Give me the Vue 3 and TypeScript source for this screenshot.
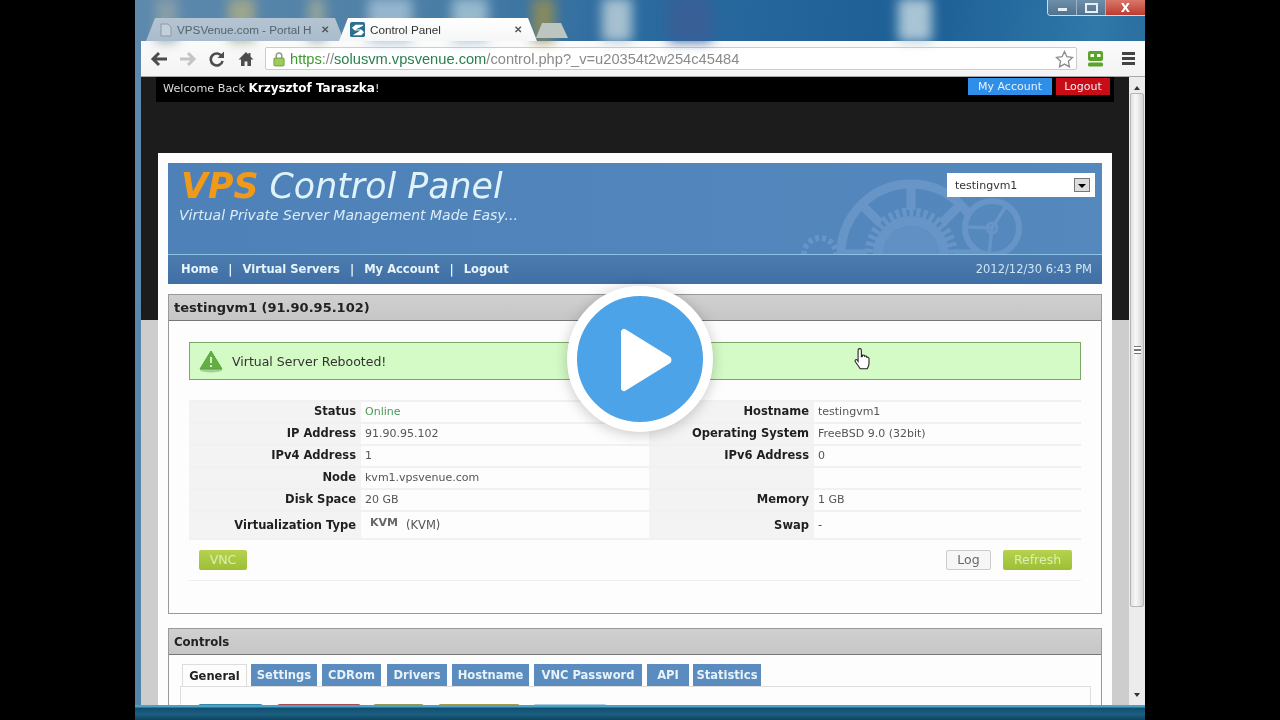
<script setup lang="ts">
interface InfoRow {
  label: string;
  value: string;
  label2: string;
  value2: string;
  online?: boolean;
  kvm?: boolean;
}

const rows: InfoRow[] = [
  { label: 'Status', value: 'Online', label2: 'Hostname', value2: 'testingvm1', online: true },
  { label: 'IP Address', value: '91.90.95.102', label2: 'Operating System', value2: 'FreeBSD 9.0 (32bit)' },
  { label: 'IPv4 Address', value: '1', label2: 'IPv6 Address', value2: '0' },
  { label: 'Node', value: 'kvm1.vpsvenue.com', label2: '', value2: '' },
  { label: 'Disk Space', value: '20 GB', label2: 'Memory', value2: '1 GB' },
  { label: 'Virtualization Type', value: '(KVM)', label2: 'Swap', value2: '-', kvm: true },
];

const navLinks = ['Home', 'Virtual Servers', 'My Account', 'Logout'];
const tabs = [
  { name: 'Settings', w: 66, gap: 5 },
  { name: 'CDRom', w: 59, gap: 6 },
  { name: 'Drivers', w: 60, gap: 5 },
  { name: 'Hostname', w: 77, gap: 5 },
  { name: 'VNC Password', w: 108, gap: 5 },
  { name: 'API', w: 42, gap: 4 },
  { name: 'Statistics', w: 68, gap: 0 },
];
const actionColors = [
  { w: 65, gap: 14, c: '#2f88a8' },
  { w: 84, gap: 12, c: '#a84a58' },
  { w: 51, gap: 14, c: '#8f9a55' },
  { w: 82, gap: 13, c: '#a39a4c' },
  { w: 74, gap: 0, c: '#a9cfe0' },
];
const desktopIcons = [
  { x: 20, w: 23, c: '#8aa0a8' },
  { x: 93, w: 27, c: '#a4a98a' },
  { x: 173, w: 17, c: '#98a69a' },
  { x: 233, w: 44, c: '#9dbbd2' },
  { x: 317, w: 36, c: '#a0c0d2' },
  { x: 397, w: 23, c: '#8f8c58' },
  { x: 467, w: 30, c: '#b4cad6' },
  { x: 533, w: 44, c: '#3a5f96' },
  { x: 763, w: 34, c: '#b8d0dc' },
];
</script>

<template>
  <div class="stage">
    <div class="screen">
      <i
        v-for="d in desktopIcons"
        :key="d.x"
        class="desk-icon"
        :style="{ left: d.x + 'px', width: d.w + 'px', background: d.c }"
      ></i>

      <div class="titlebar">
        <div class="tab tab-off">
          <svg width="12" height="14" viewBox="0 0 12 14" class="tab-ico"><path d="M1 1h7l3 3v9H1z" fill="#c3d0da" stroke="#8b9aa5" /></svg>
          <span class="tab-label">VPSVenue.com - Portal H</span>
          <span class="tab-x">✕</span>
        </div>
        <div class="tab tab-on">
          <svg width="15" height="15" viewBox="0 0 16 16" class="tab-ico">
            <rect width="16" height="16" rx="2" fill="#2c6f90" />
            <path d="M14 3H6L2 6l3 3h6l-8 5h9l3-3-3-3H6l8-4z" fill="#fff" />
          </svg>
          <span class="tab-label">Control Panel</span>
          <span class="tab-x">✕</span>
        </div>
        <div class="newtab"></div>
        <div class="winctl">
          <span class="wc wc-min"><i></i></span>
          <span class="wc wc-max"><i></i></span>
          <span class="wc wc-close">X</span>
        </div>
      </div>

      <div class="window">
        <div class="toolbar">
          <svg class="tool" width="18" height="16" viewBox="0 0 18 16"><path d="M9 2 3 8l6 6M3 8h14" fill="none" stroke="#4d4d4d" stroke-width="3" /></svg>
          <svg class="tool" width="18" height="16" viewBox="0 0 18 16"><path d="m9 2 6 6-6 6m6-6H1" fill="none" stroke="#c4c4c4" stroke-width="3" /></svg>
          <svg class="tool" width="17" height="16" viewBox="0 0 17 16"><path d="M14 5.500A6 6 0 1 0 14.600 10" fill="none" stroke="#4d4d4d" stroke-width="2.600" /><path d="M16 0.500V7h-6.500z" fill="#4d4d4d" /></svg>
          <svg class="tool home" width="16" height="16" viewBox="0 0 16 16"><path d="M8 1 0.500 8.500H3V15h3.600v-4.500h2.800V15H13V8.500h2.500L12.500 5.500V2h-2v1.500z" fill="#4d4d4d" /></svg>
          <div class="omnibox">
            <svg width="12" height="16" viewBox="0 0 13 17" class="lock"><path d="M3.500 8V5a3 3 0 0 1 6 0v3" fill="none" stroke="#8f9a8a" stroke-width="1.600" /><rect x="1" y="7.500" width="11" height="8.500" rx="1" fill="#9ccc5a" stroke="#6f9a3a" /></svg>
            <span class="url"><span class="u-green">https</span><span class="u-gray">://</span><span class="u-dark">solusvm.vpsvenue.com</span><span class="u-gray">/control.php?_v=u20354t2w254c45484</span></span>
            <svg width="19" height="18" viewBox="0 0 19 18" class="star"><path d="m9.500 1.500 2.400 5.200 5.600.7-4.100 3.900 1.100 5.600-5-2.800-5 2.800 1.100-5.600-4.100-3.900 5.600-.7z" fill="#fff" stroke="#8a8a8a" stroke-width="1.300" /></svg>
          </div>
          <svg width="15" height="16" viewBox="0 0 15 16" class="robot"><rect y="0" width="15" height="10" rx="2" fill="#5ba32b" /><rect x="2.500" y="3" width="3.500" height="3" fill="#fff" /><rect x="9" y="3" width="3.500" height="3" fill="#fff" /><rect y="11.500" width="15" height="4" rx="1.500" fill="#5ba32b" /></svg>
          <div class="burger"><i></i><i></i><i></i></div>
        </div>

        <div class="browser-page">
          <div class="viewport">
            <div class="topbar">
              <span class="welcome">Welcome Back <b>Krzysztof Taraszka</b>!</span>
              <span class="top-actions">
                <span class="top-btn blue">My Account</span>
                <span class="top-btn red">Logout</span>
              </span>
            </div>

            <div class="wrap">
              <header class="site-head">
                <div class="brand">
                  <div class="brand-text">
                    <h1><span class="vps">VPS</span> Control Panel</h1>
                    <p>Virtual Private Server Management Made Easy...</p>
                  </div>
                  <svg class="gears" width="260" height="91" viewBox="0 0 260 91" fill="none" stroke="#6895c8">
                    <circle cx="111" cy="91" r="70" stroke-width="9" />
                    <path d="M111 21v26M62 42l18 18M160 42l-18 18M41 91h26M181 91h-26" stroke-width="9" />
                    <circle cx="111" cy="91" r="42" stroke-width="9" stroke-dasharray="4 3" />
                    <circle cx="111" cy="91" r="33" stroke-width="10" />
                    <circle cx="111" cy="91" r="28" fill="#6190c4" stroke="none" />
                    <circle cx="192" cy="65" r="27" stroke-width="6" fill="#5588bd" />
                    <path d="M192 65l-3 26M192 65l-24-1M192 65l14-22" stroke-width="3.500" />
                    <circle cx="192" cy="65" r="5" stroke-width="3" />
                    <circle cx="20" cy="91" r="16" stroke-width="6" stroke-dasharray="4 3" />
                  </svg>
                  <div class="vm-select">
                    <span>testingvm1</span>
                    <span class="vm-arrow"></span>
                  </div>
                </div>
                <nav class="site-nav">
                  <template v-for="(link, i) in navLinks" :key="link">
                    <span v-if="i > 0" class="sep">|</span>
                    <a>{{ link }}</a>
                  </template>
                  <span class="clock">2012/12/30 6:43 PM</span>
                </nav>
              </header>

              <section class="panel main-panel">
                <h2 class="panel-title">testingvm1 (91.90.95.102)</h2>
                <div class="alert">
                  <svg width="24" height="24" viewBox="0 0 24 24">
                    <ellipse cx="12" cy="21" rx="11" ry="2.500" fill="#a9cf98" />
                    <path d="M12 2 23 20H1z" fill="#62b044" stroke="#58a03e" />
                    <path d="M12 8v6M12 16v2" stroke="#d8efc8" stroke-width="2" />
                  </svg>
                  <span>Virtual Server Rebooted!</span>
                </div>

                <div class="info">
                  <div v-for="(row, i) in rows" :key="row.label" class="info-row" :class="{ tall: i === rows.length - 1 }">
                    <div class="cell-label">{{ row.label }}</div>
                    <div class="cell-value" :class="{ online: row.online }">
                      <span v-if="row.kvm" class="kvm-logo">KVM</span>{{ row.value }}
                    </div>
                    <div class="cell-label second">{{ row.label2 }}</div>
                    <div class="cell-value">{{ row.value2 }}</div>
                  </div>
                  <div class="actions">
                    <span class="btn green vnc">VNC</span>
                    <span class="btn plain">Log</span>
                    <span class="btn green refresh">Refresh</span>
                  </div>
                </div>
              </section>

              <section class="panel controls">
                <h2 class="panel-title small">Controls</h2>
                <div class="tabstrip">
                  <span class="ctab active">General</span>
                  <span
                    v-for="t in tabs"
                    :key="t.name"
                    class="ctab"
                    :style="{ width: t.w + 'px', marginRight: t.gap + 'px' }"
                  >{{ t.name }}</span>
                </div>
                <div class="tab-body">
                  <i
                    v-for="a in actionColors"
                    :key="a.c"
                    :style="{ width: a.w + 'px', marginRight: a.gap + 'px', background: a.c }"
                  ></i>
                </div>
              </section>
            </div>
          </div>

          <div class="scrollbar">
            <span class="sb-arrow up"></span>
            <div class="sb-thumb"><i></i></div>
            <span class="sb-arrow down"></span>
          </div>
        </div>
      </div>

      <div class="taskbar"></div>

      <svg class="hand" width="20" height="24" viewBox="0 0 18 22">
        <path d="M6 1.500c1 0 1.500.7 1.500 1.600V9l1-.4V7.600c1-.6 2 0 2 .8 1-.5 2 0 2 1 1-.3 2 .2 2 1.200V15c0 2-.8 3-1.600 5H6.500L2 13.500c-1-1.500.6-2.600 1.800-1.500L4.500 13V3c0-1 .6-1.500 1.500-1.500z" fill="#fff" stroke="#222" stroke-width="1" />
      </svg>
    </div>

    <div class="play">
      <svg width="52" height="68" viewBox="0 0 52 68">
        <path d="M4 3 48.500 30.500a4 4 0 0 1 0 7L4 65a3 3 0 0 1-4-3V6a3 3 0 0 1 4-3z" fill="#fff" />
      </svg>
    </div>
  </div>
</template>

<style scoped>
.stage {
  position: relative;
  width: 1280px;
  height: 720px;
  background: #000;
  display: flex;
  justify-content: center;
  overflow: hidden;
  font-family: "DejaVu Sans", Verdana, sans-serif;
}

.screen {
  position: relative;
  width: 1010px;
  height: 720px;
  display: flex;
  flex-direction: column;
  overflow: hidden;
  filter: blur(0.35px);
  background: linear-gradient(100deg, #5d89ad 0%, #4d7fa6 25%, #2a6a9f 45%, #1d5f96 70%, #2f78a8 85%, #1d5a8c 100%);
}

.desk-icon {
  position: absolute;
  top: -2px;
  height: 44px;
  filter: blur(6px);
  border-radius: 3px;
  opacity: 0.9;
}

/* title bar and tabs */
.titlebar {
  position: relative;
  height: 41px;
  flex: none;
  display: flex;
  align-items: flex-end;
  padding-left: 11px;
}

.tab {
  width: 198px;
  height: 23px;
  display: flex;
  align-items: center;
  box-sizing: border-box;
  font-size: 11.7px;
  font-family: "Liberation Sans", Arial, sans-serif;
  clip-path: polygon(0 100%, 9px 0, 189px 0, 198px 100%);
  padding: 0 15px 0 14px;
}

.tab-off {
  background: linear-gradient(#b5c4d2, #a9bccd);
  color: #53646f;
}

.tab-on {
  background: linear-gradient(#ffffff, #f5f6f7);
  color: #333;
  margin-left: -5px;
  padding-left: 11px;
}

.tab-ico {
  flex: none;
  margin-right: 5px;
}

.tab-label {
  flex: 1;
  white-space: nowrap;
  overflow: hidden;
}

.tab-x {
  font-size: 10px;
  font-weight: bold;
  color: #555;
  margin-left: 5px;
}

.newtab {
  width: 32px;
  height: 15px;
  margin-bottom: 3px;
  margin-left: -1px;
  background: #bcc5c0;
  clip-path: polygon(0 100%, 6px 0, 25px 0, 32px 100%);
}

.winctl {
  position: absolute;
  right: 0;
  top: 0;
  width: 98px;
  height: 16px;
  display: flex;
  border: 1px solid #cfdbe5;
  border-top: none;
  border-right: none;
  border-radius: 0 0 0 4px;
  box-sizing: border-box;
  overflow: hidden;
}

.wc {
  display: flex;
  align-items: center;
  justify-content: center;
}

.wc-min,
.wc-max {
  width: 28px;
  background: linear-gradient(#6f8ea8, #4f7391);
  border-right: 1px solid #9fb4c6;
}

.wc-min i {
  width: 9px;
  height: 3px;
  background: #e8eef2;
  margin-top: 4px;
}

.wc-max i {
  width: 9px;
  height: 6px;
  border: 2px solid #e8eef2;
}

.wc-close {
  flex: 1;
  background: linear-gradient(#d9766a, #bb3c30);
  color: #fff;
  font-size: 12px;
  font-weight: bold;
}

/* browser window */
.window {
  flex: 1;
  min-height: 0;
  margin-left: 6px;
  display: flex;
  flex-direction: column;
}

.toolbar {
  height: 36px;
  flex: none;
  box-sizing: border-box;
  background: linear-gradient(#fbfbfb, #f3f3f3);
  border-bottom: 1px solid #a9a9a9;
  display: flex;
  align-items: center;
  padding-left: 9px;
}

.tool {
  flex: none;
  margin-right: 11px;
}

.tool.home {
  margin-left: 2px;
}

.omnibox {
  width: 812px;
  height: 23px;
  box-sizing: border-box;
  background: #fff;
  border: 1px solid #cfcbc6;
  border-radius: 2px;
  display: flex;
  align-items: center;
  padding-left: 7px;
}

.lock {
  flex: none;
  margin-right: 5px;
}

.url {
  flex: 1;
  font: 14.66px "Liberation Sans", Arial, sans-serif;
  white-space: nowrap;
}

.u-green {
  color: #3d9a2e;
}

.u-gray {
  color: #8a8a8a;
}

.u-dark {
  color: #2a7f4f;
}

.star {
  flex: none;
  margin-right: 2px;
}

.robot {
  flex: none;
  margin-left: 11px;
}

.burger {
  margin-left: 19px;
  width: 13px;
  display: flex;
  flex-direction: column;
  gap: 2px;
}

.burger i {
  height: 3px;
  background: #444;
}

.browser-page {
  flex: 1;
  min-height: 0;
  display: flex;
}

.viewport {
  flex: 1;
  min-width: 0;
  overflow: hidden;
  background: linear-gradient(#1c1c1c 243px, #cdcdcd 243px);
}

.topbar {
  height: 25px;
  margin: 0 15px;
  padding: 1px 4px 0 7px;
  box-sizing: border-box;
  background: #000;
  display: flex;
  align-items: flex-start;
  justify-content: space-between;
  font-size: 11.2px;
  color: #ddd;
}

.welcome {
  line-height: 21px;
}

.welcome b {
  color: #fff;
  font-size: 12px;
}

.top-actions {
  display: flex;
  gap: 4px;
  font-size: 11px;
}

.top-btn {
  height: 17px;
  line-height: 17px;
  text-align: center;
  color: #e8f2fb;
}

.top-btn.blue {
  width: 84px;
  background: #2f8fe8;
}

.top-btn.red {
  width: 54px;
  background: #c80d16;
}

.wrap {
  margin: 51px 17px 0;
  padding: 10px;
  background: #fdfdfd;
  height: 600px;
  box-sizing: border-box;
}

.site-head {
  height: 121px;
}

.brand {
  position: relative;
  height: 92px;
  box-sizing: border-box;
  background: linear-gradient(90deg, #4e81b8, #5588bd);
  border-bottom: 1px solid #8fc0e6;
  padding: 3px 7px 0 11px;
  display: flex;
  justify-content: space-between;
  overflow: hidden;
}

.brand h1 {
  margin: 0;
  padding-left: 2px;
  font-size: 34.8px;
  line-height: 40px;
  font-weight: 400;
  font-style: italic;
  font-family: "DejaVu Sans", sans-serif;
  color: #dff3fb;
}

.vps {
  color: #f09a1c;
  font-weight: 700;
}

.brand p {
  margin: 0;
  font-size: 14px;
  font-style: italic;
  color: #dcecf6;
  line-height: 18px;
}

.brand-text {
  position: relative;
  z-index: 1;
}

.gears {
  position: absolute;
  left: 632px;
  top: 0;
}

.vm-select {
  position: relative;
  width: 148px;
  height: 24px;
  margin-top: 7px;
  background: #fff;
  display: flex;
  align-items: center;
  justify-content: space-between;
  padding: 0 5px 0 8px;
  box-sizing: border-box;
  font-size: 11px;
  color: #333;
}

.vm-arrow {
  position: relative;
  width: 16px;
  height: 14px;
  box-sizing: border-box;
  background: #ddd;
  border: 1px solid #777;
}

.vm-arrow::after {
  content: "";
  position: absolute;
  left: 3px;
  top: 5px;
  border: 4px solid transparent;
  border-top: 4px solid #000;
}

.site-nav {
  height: 29px;
  box-sizing: border-box;
  background: linear-gradient(#4c7cae, #3f6fa5);
  padding: 0 10px 2px 13px;
  display: flex;
  align-items: center;
  font-size: 12.8px;
  font-weight: bold;
  font-family: "DejaVu Sans Condensed", "DejaVu Sans", sans-serif;
  color: #e8f4fa;
}

.sep {
  margin: 0 10px;
  font-weight: bold;
}

.clock {
  margin-left: auto;
  font-size: 11.5px;
  font-weight: normal;
  font-family: "DejaVu Sans", sans-serif;
  color: #cfe4f4;
}

.panel {
  margin-top: 10px;
  border: 1px solid #999;
  background: #fdfdfd;
}

.main-panel {
  height: 320px;
  box-sizing: border-box;
}

.panel-title {
  margin: 0;
  height: 26px;
  box-sizing: border-box;
  padding-left: 5px;
  background: linear-gradient(#d0d0d0, #c6c6c6);
  border-bottom: 1px solid #777;
  font-size: 13px;
  line-height: 26px;
  color: #222;
}

.panel-title.small {
  font-family: "DejaVu Sans Condensed", "DejaVu Sans", sans-serif;
  font-size: 13px;
}

.alert {
  margin: 21px 20px 0;
  height: 38px;
  box-sizing: border-box;
  background: #d4fbc6;
  border: 1px solid #7aa866;
  display: flex;
  align-items: center;
  gap: 9px;
  padding-left: 9px;
  font-size: 12.5px;
  color: #333;
}

.info {
  margin: 20px 20px 0;
  height: 180px;
  border-bottom: 1px solid #eeeeee;
}

.info-row {
  display: grid;
  grid-template-columns: 172px 288px 165px 267px;
  height: 22px;
  font-size: 11px;
  box-sizing: border-box;
  border-top: 2px solid #f1f1f1;
}

.info-row.tall {
  height: 30px;
  border-bottom: 2px solid #f1f1f1;
}

.cell-label {
  background: #f3f3f3;
  text-align: right;
  padding-right: 5px;
  font-size: 11.5px;
  font-weight: bold;
  color: #1f1f1f;
  line-height: 19px;
}

.tall .cell-label,
.tall .cell-value {
  line-height: 26px;
}

.cell-value {
  padding-left: 4px;
  background: #fdfdfd;
  color: #555;
  line-height: 19px;
  display: flex;
  white-space: pre;
}

.tall .cell-value {
  font-size: 11.5px;
}

.online {
  color: #4a9a5a;
}

.kvm-logo {
  color: #666;
  font-weight: bold;
  margin: 0 8px 0 5px;
  font-size: 11px;
  line-height: 22px;
}

.actions {
  display: flex;
  align-items: center;
  padding: 10px 9px 0 10px;
}

.btn {
  height: 20px;
  line-height: 20px;
  text-align: center;
  font-size: 12.5px;
  border-radius: 2px;
  box-sizing: border-box;
}

.btn.green {
  background: linear-gradient(#b6d24f, #9cbf35);
  color: #dfeeb0;
}

.btn.plain {
  background: #f6f6f6;
  border: 1px solid #ccc;
  color: #666;
  line-height: 18px;
}

.vnc {
  width: 48px;
  margin-right: auto;
}

.plain {
  width: 45px;
  margin-right: 12px;
}

.refresh {
  width: 69px;
}

.controls {
  margin-top: 14px;
}

.tabstrip {
  display: flex;
  padding: 9px 0 0 13px;
  height: 22px;
}

.ctab {
  height: 22px;
  box-sizing: border-box;
  text-align: center;
  white-space: nowrap;
  background: #5b8cbf;
  color: #e8f2f8;
  font-size: 12.8px;
  font-weight: bold;
  line-height: 22px;
  font-family: "DejaVu Sans Condensed", "DejaVu Sans", sans-serif;
}

.ctab.active {
  width: 65px;
  margin-right: 4px;
  background: #fdfdfd;
  color: #222;
  border: 1px solid #ddd;
  border-bottom: none;
}

.tab-body {
  margin: 0 10px 0 11px;
  border: 1px solid #ddd;
  padding: 17px 0 0 17px;
  display: flex;
  height: 100px;
}

.tab-body i {
  height: 4px;
  border-radius: 3px 3px 0 0;
}

.scrollbar {
  width: 16px;
  flex: none;
  background: #ececec;
  box-sizing: border-box;
  display: flex;
  flex-direction: column;
  align-items: center;
  padding: 6px 0 5px;
}

.sb-arrow {
  border: 3px solid transparent;
  flex: none;
}

.sb-arrow.up {
  border-bottom: 4px solid #333;
}

.sb-arrow.down {
  border-top: 4px solid #333;
}

.sb-thumb {
  flex: 1;
  align-self: stretch;
  margin: 3px 1px 86px;
  background: linear-gradient(90deg, #e2e2e2, #f8f8f8 40%, #d4d4d4);
  border: 1px solid #b5b5b5;
  border-radius: 2px;
  display: flex;
  align-items: center;
  justify-content: center;
}

.sb-thumb i {
  width: 7px;
  height: 6px;
  border-top: 1px solid #777;
  border-bottom: 1px solid #777;
  background: linear-gradient(#fff 40%, #777 40%, #777 60%, #fff 60%);
}

.taskbar {
  height: 15px;
  flex: none;
  background: linear-gradient(#4ea0c4 0, #4ea0c4 2px, #0f4f72 3px, #1d5f80 60%, #0d4460);
}

.hand {
  position: absolute;
  left: 718px;
  top: 347px;
}

.play {
  position: absolute;
  left: 567px;
  top: 286px;
  width: 146px;
  height: 146px;
  box-sizing: border-box;
  border: 10px solid #fff;
  border-radius: 50%;
  background: #4da3e8;
  box-shadow: 0 2px 14px rgba(0, 0, 0, 0.22);
  display: flex;
  align-items: center;
  justify-content: center;
}

.play svg {
  margin: 2px 0 0 13px;
}
</style>

<style>
html,
body {
  margin: 0;
  background: #000;
}
</style>
